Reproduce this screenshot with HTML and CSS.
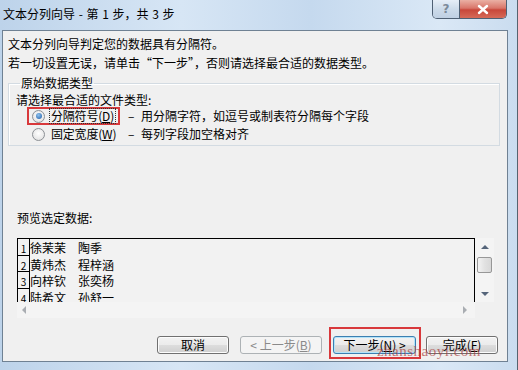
FILE: index.html
```html
<!DOCTYPE html>
<html lang="zh-CN">
<head>
  <meta charset="UTF-8">
  <title>文本分列向导</title>
  <link rel="stylesheet" href="styles.css">
</head>
<body>
  <div class="window">
    <div class="titlebar">
      <span class="title">文本分列向导 - 第 1 步，共 3 步</span>
      <div class="caption-btns">
        <span class="cap-help">?</span>
        <span class="cap-close">
          <svg width="14" height="11" viewBox="0 0 14 11"><path d="M3 2 L11 9 M11 2 L3 9" stroke="#fff" stroke-width="2.4" stroke-linecap="round"/></svg>
        </span>
      </div>
    </div>

    <div class="client">
      <div class="intro">
        <p>文本分列向导判定您的数据具有分隔符。</p>
        <p>若一切设置无误，请单击“下一步”，否则请选择最合适的数据类型。</p>
      </div>

      <fieldset class="group">
        <legend>原始数据类型</legend>
        <p class="prompt">请选择最合适的文件类型:</p>
        <div class="choice">
          <label class="opt marked"><span class="radio checked"></span><span class="opt-text focus">分隔符号(<u>D</u>)</span></label>
          <span class="desc"><span class="dash">–</span>用分隔字符，如逗号或制表符分隔每个字段</span>
        </div>
        <div class="choice">
          <label class="opt"><span class="radio"></span><span class="opt-text">固定宽度(<u>W</u>)</span></label>
          <span class="desc"><span class="dash">–</span>每列字段加空格对齐</span>
        </div>
      </fieldset>

      <p class="preview-label">预览选定数据:</p>
      <div class="preview">
        <div class="grid-view">
          <div class="row"><span class="num">1</span><span class="cell">徐茉茉</span><span class="cell">陶季</span></div>
          <div class="row"><span class="num">2</span><span class="cell">黄炜杰</span><span class="cell">程梓涵</span></div>
          <div class="row"><span class="num">3</span><span class="cell">向梓钦</span><span class="cell">张奕杨</span></div>
          <div class="row"><span class="num">4</span><span class="cell">陆希文</span><span class="cell">孙舒一</span></div>
        </div>
        <div class="vscroll">
          <span class="arrow up"></span>
          <span class="thumb"></span>
          <span class="arrow down"></span>
        </div>
        <div class="hscroll">
          <span class="arrow left"></span>
          <span class="arrow right"></span>
        </div>
        <div class="corner"></div>
      </div>

      <div class="buttons">
        <button class="btn w72">取消</button>
        <button class="btn w82" disabled>&lt; 上一步(<u>B</u>)</button>
        <button class="btn w83 default marked">下一步(<u>N</u>) &gt;</button>
        <button class="btn w72">完成(<u>F</u>)</button>
        <span class="watermark">zhanshaoyi.com</span>
      </div>
    </div>
  </div>
</body>
</html>
```

FILE: styles.css
```css
body {
  margin: 0;
  font-family: "Noto Sans CJK SC", "Liberation Sans", sans-serif;
  font-size: 12px;
  color: #000;
  background: #6d7a87;
}

p {
  margin: 0;
}

.window {
  width: 518px;
  height: 370px;
  box-sizing: border-box;
  display: flex;
  flex-direction: column;
  background: linear-gradient(to right, #bdd3ea, #d7e6f5 35%, #c5d9ee 60%, #dae8f6 85%, #cadcef);
  border-right: 1px solid #56636f;
}

/* title bar */
.titlebar {
  height: 30px;
  display: flex;
  align-items: flex-start;
  padding-left: 3px;
}
.title {
  line-height: 28px;
  word-spacing: 1px;
}
.caption-btns {
  margin-left: auto;
  margin-right: 10px;
  display: flex;
  height: 18px;
  border: 1px solid #4f6074;
  border-top: none;
  border-radius: 0 0 5px 5px;
  overflow: hidden;
}
.cap-help {
  width: 26px;
  text-align: center;
  line-height: 18px;
  font-family: "DejaVu Sans", sans-serif;
  font-weight: bold;
  font-size: 12px;
  color: #7c8a99;
  background: linear-gradient(#e6eef7, #cddbea 50%, #bfd0e3);
}
.cap-close {
  width: 46px;
  display: flex;
  align-items: center;
  justify-content: center;
  border-left: 1px solid #4f6074;
  background: linear-gradient(#eab0a4, #d9766a 45%, #c8473a 55%, #d66a58);
}

/* client area */
.client {
  position: relative;
  height: 332px;
  box-sizing: border-box;
  margin: 0 9px 0 2px;
  background: #f0f0f0;
  border: 1px solid #6f8193;
}

.intro {
  padding: 3px 0 0 5px;
  line-height: 19px;
}

.group {
  margin: 4px 7px 0 5px;
  padding: 0 0 2px 7px;
  border: 1px solid #d3dbe2;
  box-shadow: inset 1px 1px 0 #fff;
}
.group legend {
  margin-left: 4px;
  padding: 0 1px;
  line-height: 14px;
}
.prompt {
  padding-top: 2px;
  line-height: 15px;
}
.choice {
  display: grid;
  grid-template-columns: 93px auto;
  column-gap: 8px;
  margin-left: 11px;
  height: 18px;
  align-items: center;
}
.opt {
  height: 18px;
  box-sizing: border-box;
  display: flex;
  align-items: center;
  padding-left: 3px;
  border: 2px solid transparent;
  white-space: nowrap;
}
.opt.marked {
  border-color: #d8383b;
}
.radio {
  flex: none;
  width: 11px;
  height: 11px;
  border-radius: 50%;
  border: 1px solid #8c9095;
  background: radial-gradient(circle at 50% 40%, #fff, #dcdcdc);
  display: flex;
  align-items: center;
  justify-content: center;
  margin-right: 5px;
}
.radio.checked::before {
  content: "";
  width: 6px;
  height: 6px;
  border-radius: 50%;
  background: radial-gradient(circle at 40% 35%, #8fc3ef, #1d5aa6);
}
.opt-text {
  line-height: 14px;
  padding: 0 1px;
  letter-spacing: -0.2px;
}
.opt-text.focus {
  outline: 1px dotted #333;
}
.desc {
  line-height: 14px;
  white-space: nowrap;
}
.dash {
  display: inline-block;
  width: 13px;
}

/* preview */
.preview-label {
  margin: 64px 0 0 14px;
  line-height: 16px;
}
.preview {
  margin: 12px 0 0 14px;
  display: grid;
  grid-template-columns: 458px 19px;
  grid-template-rows: 64px 16px;
}
.grid-view {
  border: 1px solid #000;
  border-bottom: none;
  background: #f2f2f2;
  overflow: hidden;
}
.row {
  display: flex;
  height: 16.5px;
  line-height: 17px;
}
.num {
  width: 11px;
  box-sizing: content-box;
  border-right: 1px solid #000;
  border-bottom: 1px solid #000;
  font-size: 10px;
  line-height: 19px;
  text-align: center;
}
.cell {
  width: 48px;
}

.vscroll {
  display: flex;
  flex-direction: column;
  align-items: center;
  background: #f4f4f4;
}
.vscroll .up {
  margin-top: 7px;
}
.thumb {
  margin-top: 8px;
  width: 13px;
  height: 14px;
  border: 1px solid #979797;
  border-radius: 2px;
  background: linear-gradient(to right, #f3f3f3, #e2e2e2 50%, #d8d8d8);
}
.vscroll .down {
  margin-top: 19px;
}
.arrow {
  width: 0;
  height: 0;
}
.arrow.up {
  border-left: 4px solid transparent;
  border-right: 4px solid transparent;
  border-bottom: 4px solid #55657a;
}
.arrow.down {
  border-left: 4px solid transparent;
  border-right: 4px solid transparent;
  border-top: 4px solid #55657a;
}
.hscroll {
  display: flex;
  align-items: center;
  justify-content: space-between;
  padding: 0 8px 0 5px;
  background: #f4f4f4;
}
.arrow.left {
  border-top: 4px solid transparent;
  border-bottom: 4px solid transparent;
  border-right: 4px solid #a9adb2;
}
.arrow.right {
  border-top: 4px solid transparent;
  border-bottom: 4px solid transparent;
  border-left: 4px solid #a9adb2;
}
.corner {
  background: #f0f0f0;
}

/* buttons */
.buttons {
  position: relative;
  margin: 18px 9px 0 0;
  display: flex;
  justify-content: flex-end;
  gap: 11px;
}
.btn {
  height: 18px;
  padding: 0;
  font-family: inherit;
  font-size: 12px;
  line-height: 14px;
  color: #000;
  border: 1px solid #707070;
  border-radius: 3px;
  background: linear-gradient(#f2f2f2, #ebebeb 50%, #dddddd 51%, #cfcfcf);
  box-shadow: inset 0 0 0 1px #fcfcfc;
}
.btn:last-of-type {
  margin-left: -1px;
}
.w72 { width: 72px; }
.w82 { width: 82px; }
.w83 { width: 83px; }
.btn:disabled {
  color: #8a8a8a;
  border-color: #adb2b5;
  background: #f4f4f4;
  box-shadow: none;
}
.btn.default {
  border-color: #3c7fb1;
  box-shadow: inset 0 0 0 1px #b3e3f9;
}
.btn.marked {
  position: relative;
}
.btn.marked::after {
  content: "";
  position: absolute;
  inset: -10px -6px -6px -5px;
  border: 2px solid #d8383b;
}
.watermark {
  position: absolute;
  right: 17px;
  top: 7px;
  font-family: "Liberation Serif", serif;
  font-size: 15px;
  color: rgba(170, 60, 60, 0.7);
  letter-spacing: 0.5px;
}
```
